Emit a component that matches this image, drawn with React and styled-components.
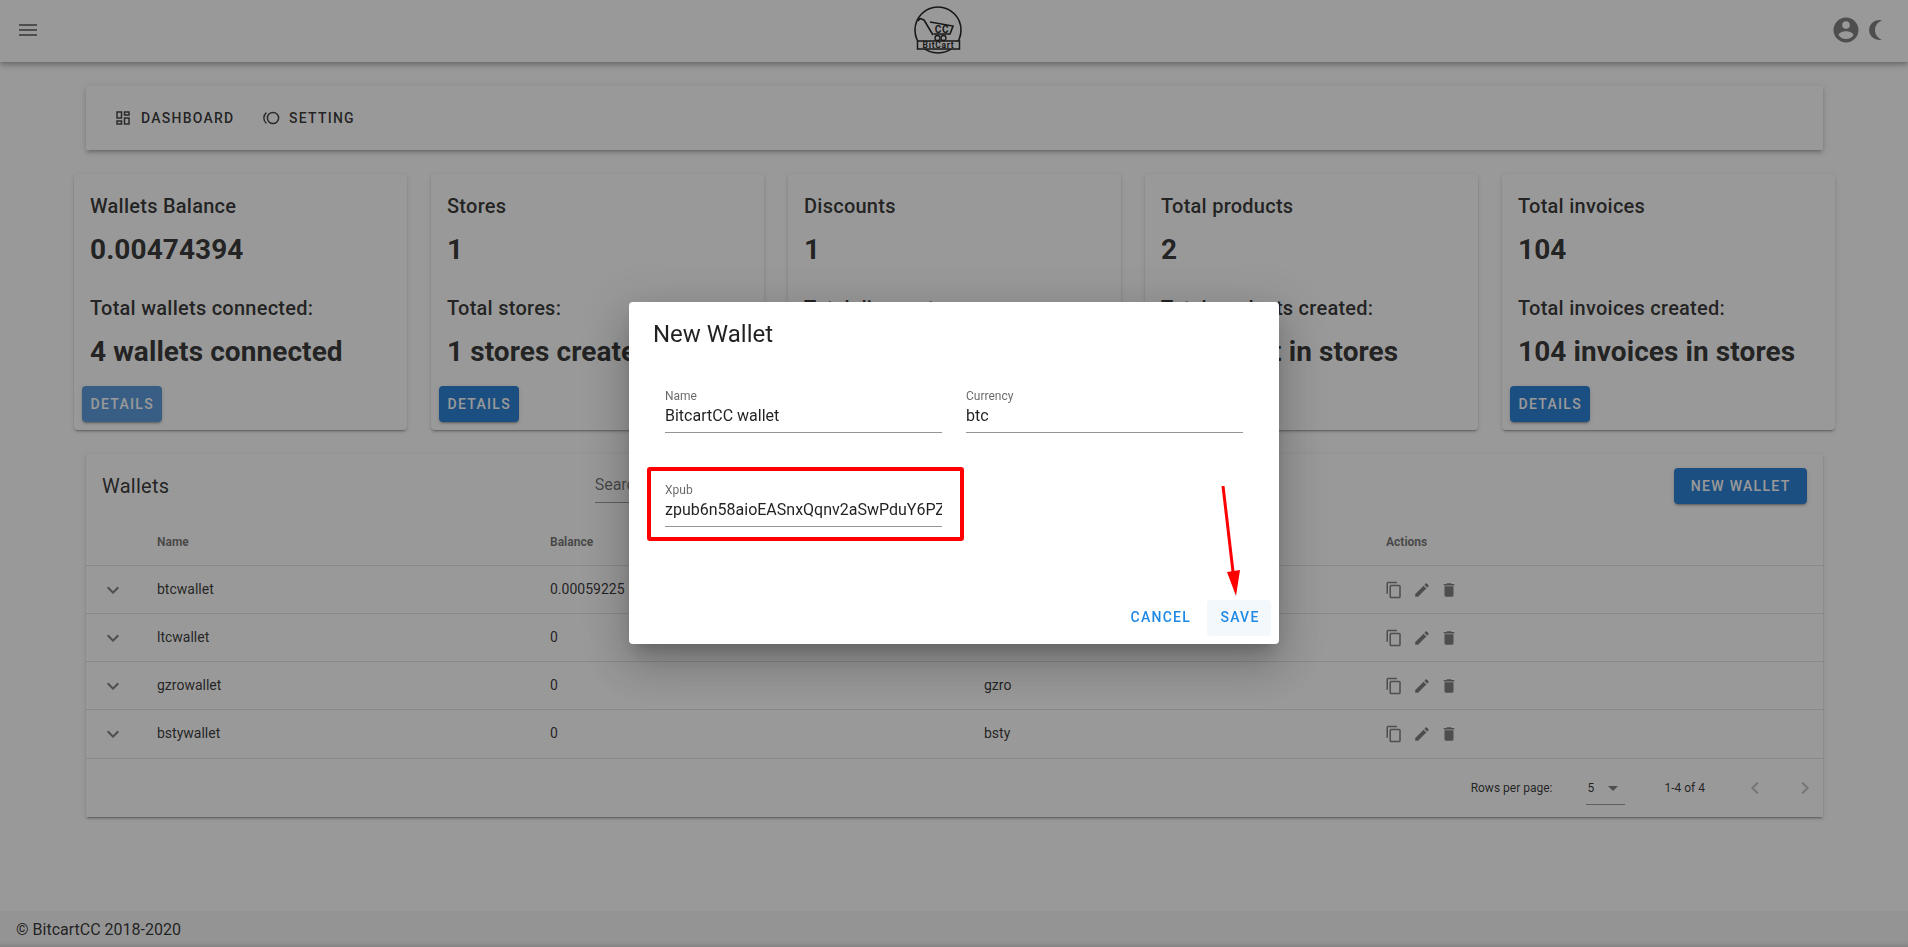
import React from "react";
import styled, { createGlobalStyle } from "styled-components";

const Global = createGlobalStyle`
  html, body { margin: 0; padding: 0; background: #fff; }
  body { font-family: Roboto, "Liberation Sans", sans-serif; color: rgba(0,0,0,.87); overflow: hidden; }
  * { box-sizing: border-box; }
`;

const P = {
  menu: "M3,6H21V8H3V6M3,11H21V13H3V11M3,16H21V18H3V16Z",
  account: "M12,19.2C9.5,19.2 7.29,17.92 6,16C6.03,14 10,12.9 12,12.9C14,12.9 17.97,14 18,16C16.71,17.92 14.5,19.2 12,19.2M12,5A3,3 0 0,1 15,8A3,3 0 0,1 12,11A3,3 0 0,1 9,8A3,3 0 0,1 12,5M12,2A10,10 0 0,0 2,12A10,10 0 0,0 12,22A10,10 0 0,0 22,12A10,10 0 0,0 12,2Z",
  moon: "M15,2C16.05,2 17.05,2.16 18,2.46C13.94,3.73 11,7.5 11,12C11,16.5 13.94,20.27 18,21.54C17.05,21.84 16.05,22 15,22A10,10 0 0,1 5,12A10,10 0 0,1 15,2Z",
  dashboard: "M19,5V7H15V5H19M9,5V11H5V5H9M19,13V19H15V13H19M9,17V19H5V17H9M21,3H13V9H21V3M11,3H3V13H11V3M21,11H13V21H21V11M11,15H3V21H11V15Z",
  copy: "M19,21H8V7H19M19,5H8A2,2 0 0,0 6,7V21A2,2 0 0,0 8,23H19A2,2 0 0,0 21,21V7A2,2 0 0,0 19,5M16,1H4A2,2 0 0,0 2,3V17H4V3H16V1Z",
  pencil: "M20.71,7.04C21.1,6.65 21.1,6 20.71,5.63L18.37,3.29C18,2.9 17.35,2.9 16.96,3.29L15.12,5.12L18.87,8.87M3,17.25V21H6.75L17.81,9.93L14.06,6.18L3,17.25Z",
  trash: "M19,4H15.5L14.5,3H9.5L8.5,4H5V6H19M6,19A2,2 0 0,0 8,21H16A2,2 0 0,0 18,19V7H6V19Z",
  down: "M7.41,8.58L12,13.17L16.59,8.58L18,10L12,16L6,10L7.41,8.58Z",
  caret: "M7,10L12,15L17,10H7Z",
  left: "M15.41,16.58L10.83,12L15.41,7.41L14,6L8,12L14,18L15.41,16.58Z",
  right: "M8.59,16.58L13.17,12L8.59,7.41L10,6L16,12L10,18L8.59,16.58Z",
};

const Svg = styled.svg`
  display: block;
  flex: none;
  width: ${(p) => p.$size || 24}px;
  height: ${(p) => p.$size || 24}px;
  fill: ${(p) => p.$color || "rgba(0,0,0,.54)"};
`;
const Icon = ({ name, size, color }) => (
  <Svg viewBox="0 0 24 24" $size={size} $color={color}><path d={P[name]} /></Svg>
);

const Shell = styled.div`
  height: 947px;
  display: flex;
  flex-direction: column;
`;
const AppBar = styled.header`
  height: 62px;
  flex: none;
  display: flex;
  align-items: center;
  justify-content: space-between;
  padding: 0 20px 2px 16px;
  background: #fff;
  box-shadow: 0 2px 4px -1px rgba(0,0,0,.2), 0 4px 5px 0 rgba(0,0,0,.14), 0 1px 10px 0 rgba(0,0,0,.12);
`;
const BarRight = styled.div`
  display: flex;
  align-items: center;
  gap: 3px;
`;
const LogoSvg = styled.svg`
  display: block;
  width: 50px;
  height: 48px;
  margin-left: 5px;
`;
const Main = styled.main`
  flex: 1;
  padding: 24px 73px 0 74px;
  display: flex;
  flex-direction: column;
  gap: 24px;
`;
const TabsBar = styled.nav`
  height: 64px;
  margin: 0 12px;
  padding: 0 12px;
  display: flex;
  align-items: center;
  background: #fff;
  box-shadow: 0 3px 3px -2px rgba(0,0,0,.2), 0 3px 4px 0 rgba(0,0,0,.14), 0 1px 8px 0 rgba(0,0,0,.12);
`;
const TabItem = styled.div`
  display: flex;
  align-items: center;
  gap: 9px;
  padding: 0 16px;
  height: 36px;
  margin-right: -4.5px;
  font-size: 14px;
  font-weight: 500;
  letter-spacing: .0892857em;
  text-transform: uppercase;
`;
const CardGrid = styled.section`
  display: grid;
  grid-template-columns: repeat(5, 333px);
  gap: 24px;
`;
const Card = styled.article`
  height: 256px;
  padding: 16px 16px 8px;
  border-radius: 4px;
  background: #fff;
  box-shadow: 0 3px 1px -2px rgba(0,0,0,.2), 0 2px 2px 0 rgba(0,0,0,.14), 0 1px 5px 0 rgba(0,0,0,.12);
  display: flex;
  flex-direction: column;
`;
const CardTitle = styled.div`
  font-size: 20px;
  line-height: 32px;
  font-weight: 500;
  letter-spacing: .0125em;
  white-space: nowrap;
`;
const CardValue = styled.div`
  font-size: 28px;
  line-height: 36px;
  font-weight: 700;
  letter-spacing: .08px;
  white-space: nowrap;
  margin-top: ${(p) => p.$gap}px;
`;
const CardSub = styled(CardTitle)`
  margin-top: 24px;
`;
const PrimaryButton = styled.div`
  height: 36px;
  display: inline-flex;
  align-items: center;
  justify-content: center;
  padding: 0 ${(p) => p.$pad || 16}px;
  border-radius: 4px;
  color: #fff;
  background: ${(p) => (p.$active ? "#4c93da" : "#1976d2")};
  font-size: 14px;
  font-weight: 500;
  letter-spacing: 1.3px;
  text-transform: uppercase;
  box-shadow: 0 3px 1px -2px rgba(0,0,0,.2), 0 2px 2px 0 rgba(0,0,0,.14), 0 1px 5px 0 rgba(0,0,0,.12);
`;
const CardAction = styled(PrimaryButton)`
  align-self: flex-start;
  margin: 16px 0 0 -8px;
`;
const TablePanel = styled.section`
  height: 363px;
  margin: 0 12px;
  background: #fff;
  box-shadow: 0 3px 1px -2px rgba(0,0,0,.2), 0 2px 2px 0 rgba(0,0,0,.14), 0 1px 5px 0 rgba(0,0,0,.12);
  display: flex;
  flex-direction: column;
`;
const TableBar = styled.div`
  height: 64px;
  flex: none;
  padding: 0 16px;
  display: flex;
  align-items: center;
  justify-content: space-between;
`;
const TableTitle = styled.div`
  font-size: 20px;
  letter-spacing: .0125em;
  width: 70px;
`;
const SearchBox = styled.div`
  width: 657px;
  height: 32px;
  margin-top: 2px;
  border-bottom: 1px solid rgba(0,0,0,.42);
  font-size: 16px;
  line-height: 28px;
  color: rgba(0,0,0,.6);
`;
const Row = styled.div`
  display: grid;
  grid-template-columns: 71px 393px 434px 402px 1fr;
  align-items: center;
  height: ${(p) => p.$h}px;
  flex: none;
  border-bottom: 1px solid rgba(0,0,0,.12);
  font-size: ${(p) => (p.$head ? 12 : 14)}px;
  font-weight: ${(p) => (p.$head ? 700 : 400)};
  color: ${(p) => (p.$head ? "rgba(0,0,0,.6)" : "rgba(0,0,0,.87)")};
`;
const Cell = styled.span`
  margin-bottom: 2px;
`;
const Expander = styled.div`
  padding-left: 15px;
`;
const Actions = styled.div`
  display: flex;
  align-items: center;
  gap: 9.5px;
  margin-left: -1px;
`;
const TableFoot = styled.div`
  flex: 1;
  display: flex;
  align-items: center;
  justify-content: flex-end;
  padding-right: 6px;
  font-size: 12px;
`;
const RowsLabel = styled.span`
  margin-right: 34px;
`;
const RowsSelect = styled.div`
  width: 39px;
  height: 32px;
  margin-top: 1px;
  padding-left: 1px;
  display: flex;
  align-items: center;
  justify-content: space-between;
  border-bottom: 1px solid rgba(0,0,0,.42);
  margin-right: 39px;
`;
const PageText = styled.span`
  margin-right: 38px;
`;
const PagerGap = styled.div`
  display: flex;
  gap: 26px;
`;
const Footer = styled.footer`
  height: 36px;
  flex: none;
  padding: 0 16px;
  display: flex;
  align-items: center;
  background: #f5f5f5;
  font-size: 16px;
  box-shadow: inset 0 -6px 6px -6px rgba(0,0,0,.25);
`;
const Overlay = styled.div`
  position: fixed;
  inset: 0;
  background: rgba(33,33,33,.46);
  display: flex;
  align-items: center;
  justify-content: center;
`;
const Dialog = styled.div`
  position: relative;
  width: 650px;
  height: 342px;
  margin-bottom: 1px;
  border-radius: 4px;
  background: #fff;
  display: flex;
  flex-direction: column;
  box-shadow: 0 11px 15px -7px rgba(0,0,0,.2), 0 24px 38px 3px rgba(0,0,0,.14), 0 9px 46px 8px rgba(0,0,0,.12);
`;
const DialogTitle = styled.div`
  padding: 16px 24px;
  font-size: 24px;
  line-height: 32px;
`;
const FieldGrid = styled.div`
  flex: 1;
  padding: 24px 36px 0;
  display: grid;
  grid-template-columns: 277px 277px;
  grid-auto-rows: 43px;
  column-gap: 24px;
  row-gap: 51px;
`;
const Field = styled.div`
  position: relative;
  border-bottom: 1px solid rgba(0,0,0,.42);
`;
const FieldLabel = styled.div`
  font-size: 12px;
  line-height: 12px;
  color: rgba(0,0,0,.6);
`;
const FieldInput = styled.input`
  display: block;
  width: 100%;
  height: 24px;
  margin-top: 2px;
  padding: 0;
  border: 0;
  outline: 0;
  background: transparent;
  font: 400 16px/24px Roboto, "Liberation Sans", sans-serif;
  color: rgba(0,0,0,.87);
`;
const Highlight = styled.div`
  position: absolute;
  left: -18px;
  right: -22px;
  top: -17px;
  bottom: -15px;
  border: 4px solid #f00;
  border-radius: 3px;
`;
const ArrowSvg = styled.svg`
  position: absolute;
  left: 591px;
  top: 184px;
  width: 24px;
  height: 112px;
`;
const DialogActions = styled.div`
  flex: none;
  display: flex;
  justify-content: flex-end;
  gap: 9px;
  padding: 8px;
`;
const TextButton = styled.div`
  height: 36px;
  min-width: 64px;
  padding: 0 7px 2px 9px;
  display: flex;
  align-items: center;
  justify-content: center;
  border-radius: 4px;
  color: #1e88e5;
  background: ${(p) => (p.$hover ? "rgba(25,118,210,.05)" : "transparent")};
  font-size: 14px;
  font-weight: 500;
  letter-spacing: .0892857em;
  text-transform: uppercase;
`;

const cards = [
  ["Wallets Balance", "0.00474394", "Total wallets connected:", "4 wallets connected"],
  ["Stores", "1", "Total stores:", "1 stores created"],
  ["Discounts", "1", "Total discounts:", "1 discounts created"],
  ["Total products", "2", "Total products created:", "2 product in stores"],
  ["Total invoices", "104", "Total invoices created:", "104 invoices in stores"],
];
const wallets = [
  ["btcwallet", "0.00059225", "btc", 48],
  ["ltcwallet", "0", "ltc", 48],
  ["gzrowallet", "0", "gzro", 48],
  ["bstywallet", "0", "bsty", 49],
];

const Logo = () => (
  <LogoSvg viewBox="0 0 50 48" fill="none" stroke="#111">
    <circle cx="25" cy="24" r="23" strokeWidth="1.6" />
    <path d="M5 15 L7 12.5 L11 14 L20 29" strokeWidth="1.6" />
    <path d="M17 16 L40 20 L37 28 L20.5 28" strokeWidth="1.6" />
    <circle cx="24.5" cy="32" r="2.5" strokeWidth="1.3" />
    <circle cx="30.5" cy="32" r="2.5" strokeWidth="1.3" />
    <text x="29" y="26.5" textAnchor="middle" fontFamily="Roboto" fontWeight="700" fontSize="10" letterSpacing=".6" fill="#111" stroke="none">CC</text>
    <rect x="4.5" y="35" width="42" height="8" fill="#fff" strokeWidth="1.5" />
    <text x="25.5" y="42" textAnchor="middle" fontFamily="Roboto" fontWeight="700" fontSize="8.5" letterSpacing=".7" fill="#111" stroke="none">BitCart</text>
  </LogoSvg>
);

const SettingIcon = () => (
  <Svg viewBox="0 0 18 18" $size={18} stroke="rgba(0,0,0,.8)" style={{ fill: "none" }}>
    <circle cx="11" cy="9" r="5.6" strokeWidth="1.5" />
    <path d="M4.4 3.6 A7 7 0 0 0 4.4 14.4" strokeWidth="1.4" />
  </Svg>
);

export default function App() {
  return (
    <>
      <Global />
      <Shell>
        <AppBar>
          <Icon name="menu" />
          <Logo />
          <BarRight>
            <Icon name="account" size={30} />
            <Icon name="moon" />
          </BarRight>
        </AppBar>
        <Main>
          <TabsBar>
            <TabItem><Icon name="dashboard" size={18} color="rgba(0,0,0,.8)" />Dashboard</TabItem>
            <TabItem><SettingIcon />Setting</TabItem>
          </TabsBar>
          <CardGrid>
            {cards.map((c, i) => (
              <Card key={c[0]}>
                <CardTitle>{c[0]}</CardTitle>
                <CardValue $gap={10}>{c[1]}</CardValue>
                <CardSub>{c[2]}</CardSub>
                <CardValue $gap={10}>{c[3]}</CardValue>
                <CardAction $active={i === 0} $pad={8.5}>Details</CardAction>
              </Card>
            ))}
          </CardGrid>
          <TablePanel>
            <TableBar>
              <TableTitle>Wallets</TableTitle>
              <SearchBox>Search</SearchBox>
              <PrimaryButton $pad={16.5}>New wallet</PrimaryButton>
            </TableBar>
            <Row $head $h={48}>
              <span />
              <span>Name</span>
              <span>Balance</span>
              <span>Currency</span>
              <span>Actions</span>
            </Row>
            {wallets.map((w) => (
              <Row key={w[0]} $h={w[3]}>
                <Expander><Icon name="down" /></Expander>
                <Cell>{w[0]}</Cell>
                <Cell>{w[1]}</Cell>
                <Cell>{w[2]}</Cell>
                <Actions>
                  <Icon name="copy" size={18} />
                  <Icon name="pencil" size={18} />
                  <Icon name="trash" size={18} />
                </Actions>
              </Row>
            ))}
            <TableFoot>
              <RowsLabel>Rows per page:</RowsLabel>
              <RowsSelect>5<Icon name="caret" size={24} /></RowsSelect>
              <PageText>1-4 of 4</PageText>
              <PagerGap>
                <Icon name="left" color="rgba(0,0,0,.26)" />
                <Icon name="right" color="rgba(0,0,0,.26)" />
              </PagerGap>
            </TableFoot>
          </TablePanel>
        </Main>
        <Footer>© BitcartCC 2018-2020</Footer>
      </Shell>
      <Overlay>
        <Dialog>
          <DialogTitle>New Wallet</DialogTitle>
          <FieldGrid>
            <Field>
              <FieldLabel>Name</FieldLabel>
              <FieldInput readOnly value="BitcartCC wallet" />
            </Field>
            <Field>
              <FieldLabel>Currency</FieldLabel>
              <FieldInput readOnly value="btc" />
            </Field>
            <Field>
              <FieldLabel>Xpub</FieldLabel>
              <FieldInput readOnly value="zpub6n58aioEASnxQqnv2aSwPduY6PZkLmTz8rVqWx" />
              <Highlight />
            </Field>
          </FieldGrid>
          <DialogActions>
            <TextButton>Cancel</TextButton>
            <TextButton $hover>Save</TextButton>
          </DialogActions>
          <ArrowSvg viewBox="0 0 24 112">
            <path d="M3 0 L13.5 90" stroke="#f00" strokeWidth="3" fill="none" />
            <path d="M7 86 L20 84 L16 110 Z" fill="#f00" />
          </ArrowSvg>
        </Dialog>
      </Overlay>
    </>
  );
}
